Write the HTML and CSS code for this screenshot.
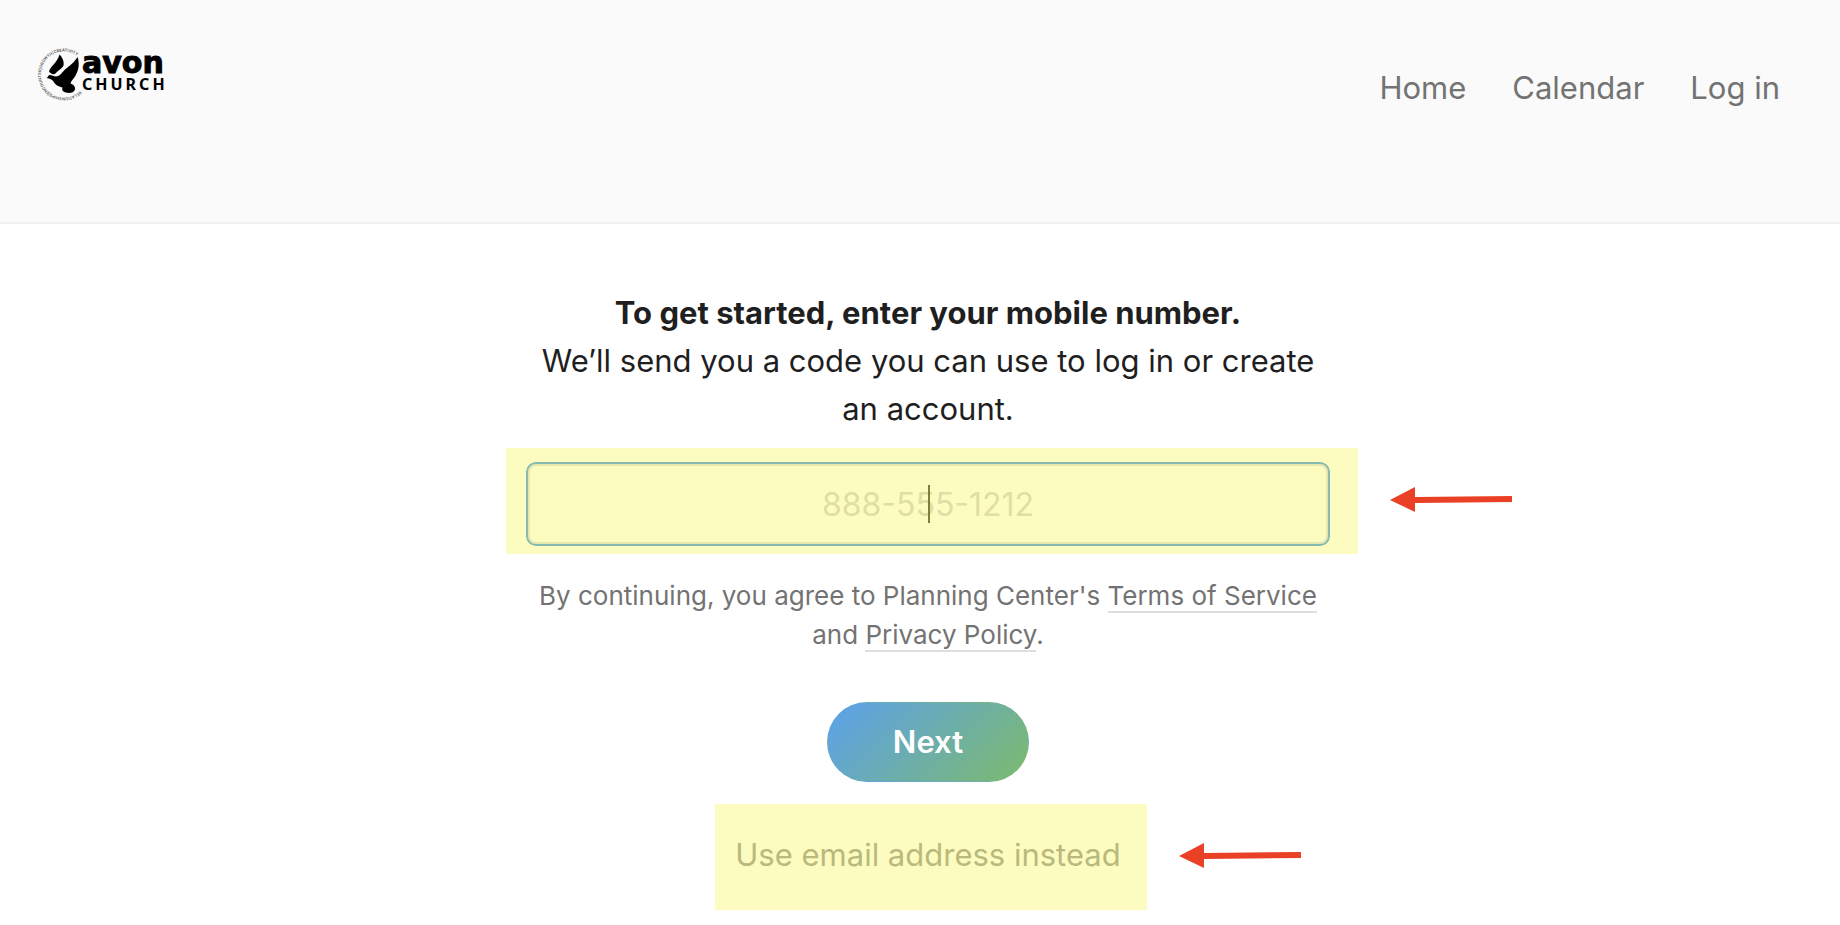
FILE: index.html
```html
<!DOCTYPE html>
<html lang="en">
<head>
<meta charset="utf-8">
<title>Log in - Avon Church</title>
<link rel="stylesheet" href="styles.css">
</head>
<body>
<header class="site-header">
  <a class="logo" href="#" aria-label="Avon Church">
    <svg width="132" height="60" viewBox="36 44 132 60">
      <path id="ring" fill="none" d="M80 91 A23 23 0 1 1 80 58"/>
      <text class="ring-text"><textPath href="#ring">RELATIONSHIPS|ENCOUNTER|GROWTH|CREATIVITY</textPath></text>
      <path d="M59.500 54.500C62 57 64 60.500 63.700 64.500C63.300 68 59 69.500 56 73C53.500 75.500 50.500 73.500 49 71.500C50.500 66 57 63 59.500 54.500Z"/>
      <path d="M77.500 57C80 64 78.500 71 75 76.500C73 79.500 71 81 70.500 83.500C73.500 84.500 75.500 86.500 75 89.500C74 93 69 93.500 66 92.500C63 92 61.500 90 62.500 87.500C59.500 87 55 85 53.500 81.500C52.500 79.500 49.500 78.500 46.500 78C48 77.500 47.500 76 49.500 75C51.500 74.500 53.500 76.500 56 76.500C59.500 76.500 61.500 73 64.500 70C69 66 74 63 77.500 57Z"/>
      <text class="logo-name" x="82" y="73">avon</text>
      <text class="logo-sub" x="82" y="90">CHURCH</text>
    </svg>
  </a>
  <nav class="site-nav">
    <a href="#">Home</a>
    <a href="#">Calendar</a>
    <a href="#">Log in</a>
  </nav>
</header>
<main class="page">
  <form class="login">
    <label class="intro" for="phone"><strong>To get started, enter your mobile number.</strong><br>We’ll send you a code you can use to log in or create an account.</label>
    <div class="highlight field">
      <input class="phone" id="phone" type="tel" placeholder="888-555-1212">
      <span class="caret"></span>
      <svg class="arrow" width="124" height="28" viewBox="0 0 124 28"><path d="M1 14L26 1V11L123 10V16L26 17V26Z"/></svg>
    </div>
    <p class="terms">By continuing, you agree to Planning Center's <a href="#">Terms of Service</a> and <a href="#">Privacy Policy</a>.</p>
    <button class="next" type="submit">Next</button>
    <div class="highlight alternate">
      <button class="email" type="button">Use email address instead</button>
      <svg class="arrow" width="124" height="28" viewBox="0 0 124 28"><path d="M1 14L26 1V11L123 10V16L26 17V26Z"/></svg>
    </div>
  </form>
</main>
</body>
</html>
```
FILE: styles.css
```css
* {
  box-sizing: border-box;
}

body {
  margin: 0;
  background: #fff;
  color: #1f1f1f;
  font-family: Inter, "Liberation Sans", sans-serif;
  font-size: 31px;
  line-height: 48px;
}

.site-header {
  display: flex;
  justify-content: space-between;
  align-items: flex-start;
  min-height: 224px;
  padding: 44px 60px 0 36px;
  border-bottom: 2px solid #f0f0f0;
  background: #fafafa;
}

.logo svg {
  display: block;
}

.logo-name {
  font: 700 30px "DejaVu Sans", sans-serif;
  stroke: #000;
  stroke-width: 1px;
}

.logo-sub {
  font: 700 16px "Noto Sans", sans-serif;
  letter-spacing: 3px;
}

.ring-text {
  font: 600 4px Inter, sans-serif;
  fill: #555;
}

.site-nav {
  display: flex;
  gap: 46px;
  padding-top: 20px;
}

.site-nav a {
  color: #737373;
  text-decoration: none;
}

.page {
  padding: 65px 0 0 16px;
}

.login {
  display: flex;
  flex-direction: column;
  align-items: center;
  max-width: 804px;
  margin: 0 auto;
}

.intro {
  text-align: center;
}

.intro strong {
  font-weight: 700;
}

.highlight {
  position: relative;
  background: #fdfcc0;
}

.field {
  align-self: stretch;
  margin: 15px -28px 0 -20px;
  padding: 14px 28px 8px 20px;
}

.phone {
  display: block;
  width: 100%;
  height: 84px;
  padding: 0 16px;
  border: 2px solid #88bbb0;
  border-radius: 10px;
  outline: 0;
  background: transparent;
  box-shadow: inset 0 0 0 2px #e8e7b0;
  color: #7f7f38;
  font: inherit;
  font-size: 32px;
  text-align: center;
}

.phone::placeholder {
  color: #dfdea4;
  opacity: 1;
}

.caret {
  position: absolute;
  top: 37px;
  left: 422px;
  width: 2px;
  height: 38px;
  background: #7f7f38;
}

.arrow {
  position: absolute;
  top: 38px;
  left: calc(100% + 31px);
  fill: #ea4025;
}

.terms {
  margin: 22px 0 0;
  color: #737373;
  font-size: 26px;
  line-height: 39px;
  text-align: center;
}

.terms a {
  border-bottom: 2px solid #dedede;
  color: inherit;
  text-decoration: none;
}

.next {
  height: 80px;
  margin: 48px 0 22px;
  padding: 0 65px;
  border: 1px solid transparent;
  border-radius: 40px;
  background: linear-gradient(135deg, #5ba1ed, #7dba6c);
  color: #fff;
  font: inherit;
  font-weight: 600;
}

.alternate {
  margin-left: 6px;
  padding: 27px 26px 31px 20px;
}

.email {
  display: block;
  padding: 0;
  border: 0;
  background: none;
  color: #bab97c;
  font: inherit;
}
```
